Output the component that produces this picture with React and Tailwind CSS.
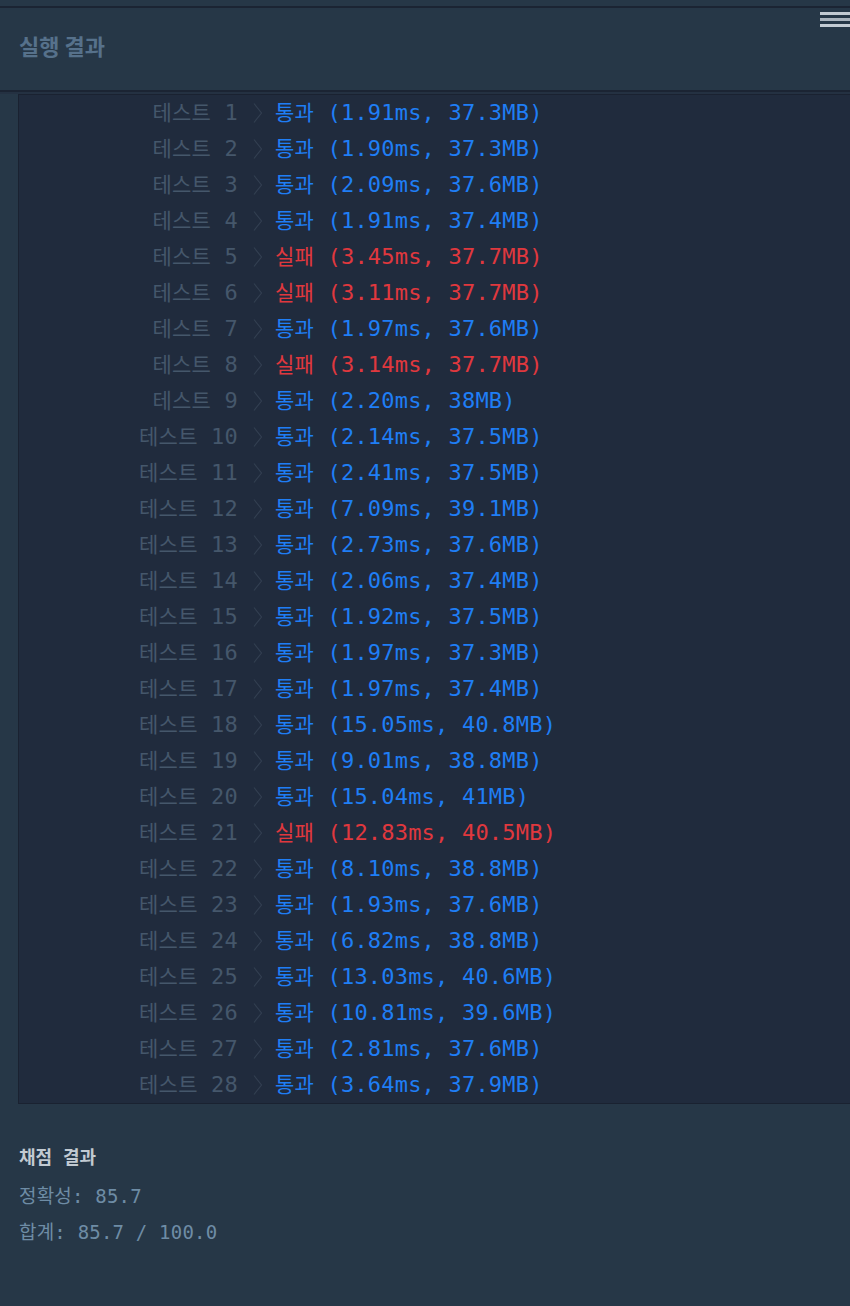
const MONO = "font-['DejaVu_Sans_Mono','Noto_Sans_CJK_KR',monospace]";

const results = [
  [true, "1.91ms", "37.3MB"],
  [true, "1.90ms", "37.3MB"],
  [true, "2.09ms", "37.6MB"],
  [true, "1.91ms", "37.4MB"],
  [false, "3.45ms", "37.7MB"],
  [false, "3.11ms", "37.7MB"],
  [true, "1.97ms", "37.6MB"],
  [false, "3.14ms", "37.7MB"],
  [true, "2.20ms", "38MB"],
  [true, "2.14ms", "37.5MB"],
  [true, "2.41ms", "37.5MB"],
  [true, "7.09ms", "39.1MB"],
  [true, "2.73ms", "37.6MB"],
  [true, "2.06ms", "37.4MB"],
  [true, "1.92ms", "37.5MB"],
  [true, "1.97ms", "37.3MB"],
  [true, "1.97ms", "37.4MB"],
  [true, "15.05ms", "40.8MB"],
  [true, "9.01ms", "38.8MB"],
  [true, "15.04ms", "41MB"],
  [false, "12.83ms", "40.5MB"],
  [true, "8.10ms", "38.8MB"],
  [true, "1.93ms", "37.6MB"],
  [true, "6.82ms", "38.8MB"],
  [true, "13.03ms", "40.6MB"],
  [true, "10.81ms", "39.6MB"],
  [true, "2.81ms", "37.6MB"],
  [true, "3.64ms", "37.9MB"],
];

function Chevron() {
  return (
    <svg width="10" height="22" viewBox="0 0 10 22" className="ml-[15px] mr-[12px] shrink-0">
      <path d="M1 1.5 L8.5 11 L1 20.5" fill="none" stroke="#323f51" strokeWidth="1.2" />
    </svg>
  );
}

export default function App() {
  return (
    <div className="min-h-[1306px] w-[850px] overflow-hidden bg-[#263747]">
      <div className="h-[6px]" />
      <div className="h-[2px] bg-[#1b2433]" />

      {/* header */}
      <div className="flex h-[82px] items-start justify-between">
        <h2 className="pl-[19px] pt-[21px] text-[22px] font-bold leading-[32px] text-[#56718b] font-['Noto_Sans_CJK_KR',sans-serif]">
          실행 결과
        </h2>
        <div className="mt-[4px] -mr-[4px] flex w-[34px] flex-col gap-[3px]">
          <div className="h-[3px] bg-[#c3cbd3]" />
          <div className="h-[3px] bg-[#aab4be]" />
          <div className="h-[3px] bg-[#c3cbd3]" />
        </div>
      </div>
      <div className="h-[2px] bg-[#1b2433]" />
      <div className="h-[2px] bg-[#243142]" />

      {/* result console */}
      <div className={`ml-[18px] border border-r-0 border-[#1a2231] bg-[#202b3d] ${MONO}`}>
        {results.map(([ok, time, mem], i) => (
          <div key={i} className="flex h-[36px] items-center text-[22px] tracking-[0.2px]">
            <div className="w-[219px] shrink-0 text-right text-[#45576b]">
              <span className="text-[21px]">테스트</span> {i + 1}
            </div>
            <Chevron />
            <div className={ok ? "text-[#1f7ef5]" : "text-[#e0383e]"}>
              <span className="text-[21px]">{ok ? "통과" : "실패"}</span> ({time}, {mem})
            </div>
          </div>
        ))}
      </div>

      {/* score */}
      <div className={`px-[19px] pt-[40px] ${MONO}`}>
        <h3 className="text-[18px] font-bold leading-[28px] text-[#c2cad2]">채점 결과</h3>
        <p className="mt-[10px] text-[19px] leading-[28px] tracking-[0.2px] text-[#6e8ca5]">정확성: 85.7</p>
        <p className="mt-[8px] text-[19px] leading-[28px] tracking-[0.2px] text-[#6e8ca5]">합계: 85.7 / 100.0</p>
      </div>
    </div>
  );
}
